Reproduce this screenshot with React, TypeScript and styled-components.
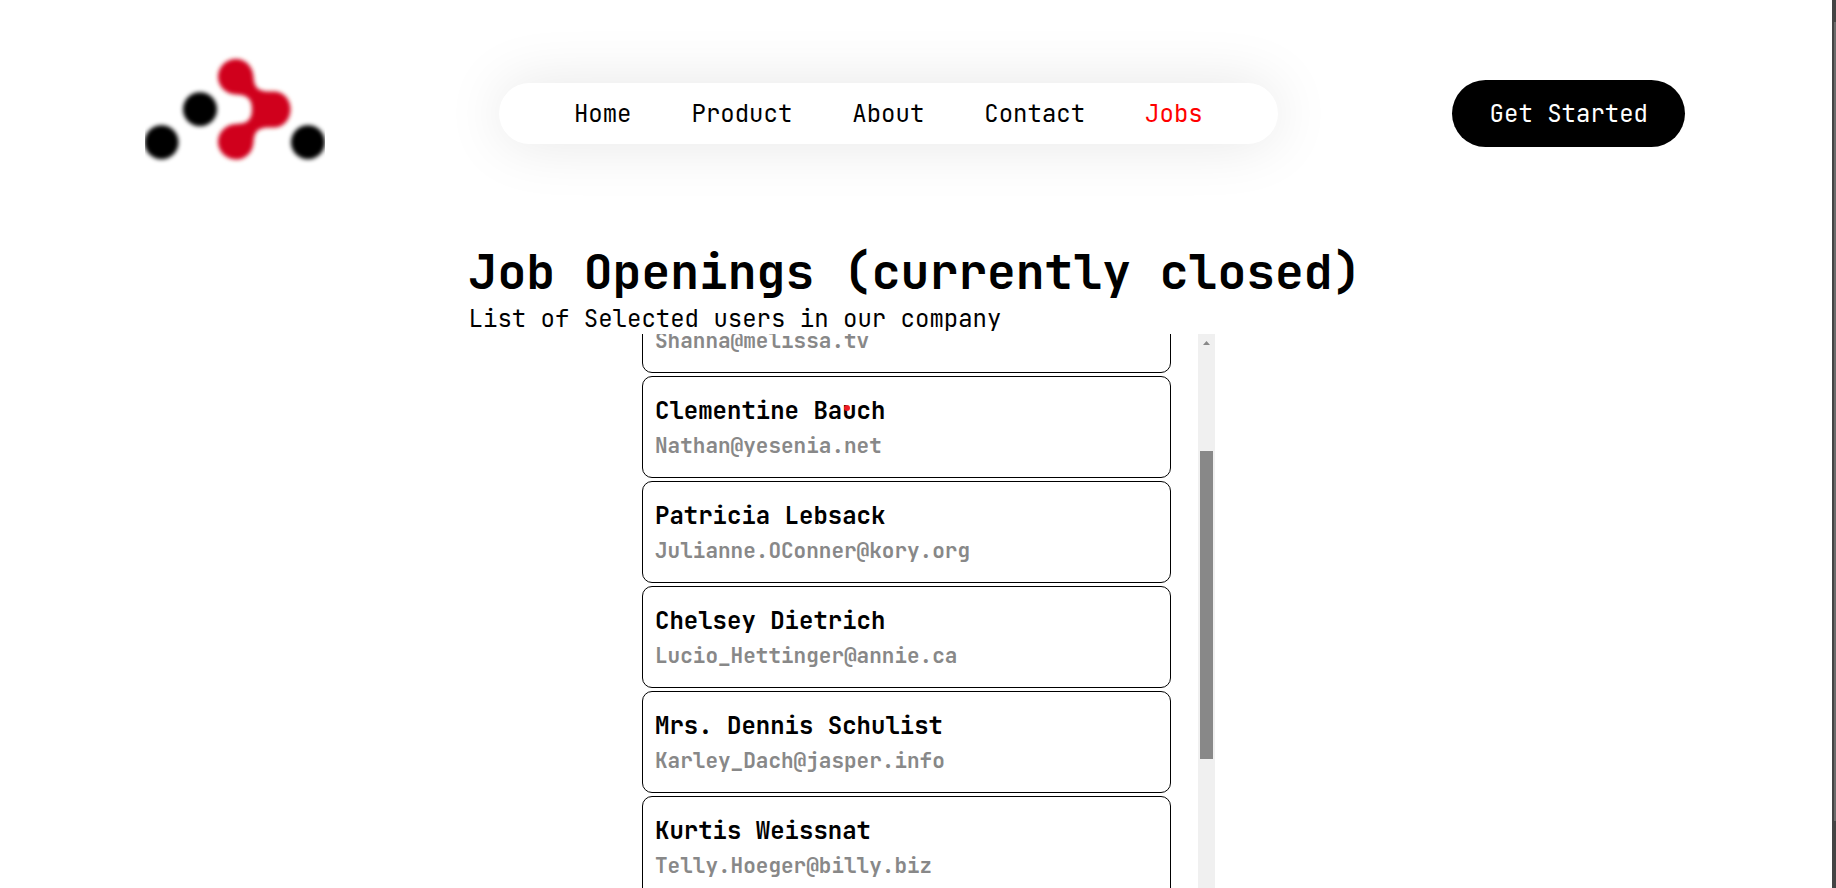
import { useLayoutEffect, useRef } from "react";
import styled, { createGlobalStyle } from "styled-components";

const GlobalStyle = createGlobalStyle`
  * { box-sizing: border-box; margin: 0; padding: 0; }
  body {
    background: #fff;
    color: #000;
    font-family: "JetBrains Mono", "DejaVu Sans Mono", monospace;
    font-size: 24px;
    line-height: 30px;
  }
`;

const Window = styled.div`
  display: flex;
  height: 100vh;
  overflow: hidden;
`;

const Page = styled.div`
  flex: 1;
  min-width: 0;
  display: flex;
  flex-direction: column;
`;

const WindowTrack = styled.div`
  width: 4px;
  background: #444;
  padding: 22px 0 0 2px;
`;

const WindowThumb = styled.div`
  height: 799px;
  max-height: 100%;
  background: #6b6b6b;
`;

const Header = styled.header`
  display: flex;
  align-items: center;
  justify-content: space-between;
  padding: 40px 147px 0 145px;
`;

const LogoLink = styled.a`
  display: block;
  width: 180px;
  height: 147px;

  svg {
    display: block;
    width: 100%;
    height: 100%;
    overflow: hidden;
  }
`;

const Nav = styled.nav`
  display: flex;
  gap: 60px;
  padding: 16px 75px 15px;
  border-radius: 32px;
  background: #fff;
  box-shadow: 0 0 60px rgba(0, 0, 0, 0.1);
`;

const NavLink = styled.a<{ $active?: boolean }>`
  color: ${({ $active }) => ($active ? "#f00" : "#000")};
  text-decoration: none;
`;

const StartButton = styled.button`
  padding: 19px 37px 18px 38px;
  border: 0;
  border-radius: 34px;
  background: #000;
  color: #fff;
  font: inherit;
  cursor: pointer;
`;

const Main = styled.main`
  flex: 1;
  min-height: 0;
  display: flex;
  flex-direction: column;
  align-items: center;
  padding: 53px 2px 0 0;
`;

const Title = styled.h1`
  margin-bottom: 1px;
  font-size: 48px;
  line-height: 63px;
  font-weight: 700;
`;

const UserPanel = styled.section`
  flex: 1;
  min-height: 0;
  width: 600px;
  max-width: 100%;
  display: flex;
  gap: 27px;
  padding-left: 27px;
`;

const UserList = styled.ul`
  flex: 1;
  list-style: none;
  overflow-y: scroll;
  scrollbar-width: none;
`;

const UserCard = styled.li`
  position: relative;
  display: flex;
  flex-direction: column;
  gap: 5px;
  margin-bottom: 3px;
  padding: 18px 12px 17px;
  border: 1px solid #000;
  border-radius: 10px;
`;

const UserName = styled.h2`
  font-size: 24px;
  line-height: 32px;
  font-weight: 700;
`;

const UserEmail = styled.p`
  color: #888;
  font-size: 21px;
  line-height: 28px;
  font-weight: 700;
`;

const Track = styled.div`
  width: 17px;
  display: flex;
  flex-direction: column;
  align-items: center;
  gap: 106px;
  padding-top: 7px;
  background: #f0f0f0;
`;

const Arrow = styled.svg`
  display: block;
  width: 7px;
  height: 4px;
`;

const Thumb = styled.div`
  width: 13px;
  height: 308px;
  background: #888;
`;

const CursorDot = styled.span`
  position: absolute;
  left: 201px;
  top: 28px;
  width: 6px;
  height: 6px;
  border-radius: 50%;
  background: #ed1c24;
`;

const links = ["Home", "Product", "About", "Contact", "Jobs"];

const users = [
  { name: "Leanne Graham", email: "Sincere@april.biz" },
  { name: "Ervin Howell", email: "Shanna@melissa.tv" },
  { name: "Clementine Bauch", email: "Nathan@yesenia.net" },
  { name: "Patricia Lebsack", email: "Julianne.OConner@kory.org" },
  { name: "Chelsey Dietrich", email: "Lucio_Hettinger@annie.ca" },
  { name: "Mrs. Dennis Schulist", email: "Karley_Dach@jasper.info" },
  { name: "Kurtis Weissnat", email: "Telly.Hoeger@billy.biz" },
  { name: "Nicholas Runolfsdottir V", email: "Sherwood@rosamond.me" },
  { name: "Glenna Reichert", email: "Chaim_McDermott@dana.io" },
  { name: "Clementina DuBuque", email: "Rey.Padberg@karina.biz" },
];

const hovered = "Clementine Bauch";
const initialScroll = 168;

function Logo() {
  return (
    <svg viewBox="0 0 180 147" aria-hidden="true">
      <defs>
        <filter id="soften" x="-20%" y="-20%" width="140%" height="140%">
          <feGaussianBlur stdDeviation="2.2" />
        </filter>
      </defs>
      <g filter="url(#soften)">
        <circle cx="16.5" cy="102.3" r="17" />
        <circle cx="55" cy="69.3" r="17" />
        <circle cx="163" cy="102.3" r="17" />
        <path
          fill="#d0021b"
          d="M91 19C101 19 108 27 108.5 37C109 43 110 47 114 49.5C119 52 124 51.5 130 51.5C139 52 145.5 60 145.5 69.3C145.5 79 139 87 130 87.5C124 87.5 119 87 114 89.5C110 92 109 96 108.5 102C108 112 101 119.5 91 119.5C81 119.5 73 111 73 102C73 92 81 84.5 91 84C101 84 107 81 107 69.3C107 57.5 101 55 91 54.5C81 54.5 73 46 73 37C73 27 81 19 91 19Z"
        />
      </g>
    </svg>
  );
}

export default function App() {
  const listRef = useRef<HTMLUListElement>(null);

  useLayoutEffect(() => {
    if (listRef.current) listRef.current.scrollTop = initialScroll;
  }, []);

  return (
    <>
      <GlobalStyle />
      <Window>
        <Page>
          <Header>
            <LogoLink href="#home" aria-label="Home page">
              <Logo />
            </LogoLink>
            <Nav>
              {links.map((label) => (
                <NavLink key={label} href={`#${label.toLowerCase()}`} $active={label === "Jobs"}>
                  {label}
                </NavLink>
              ))}
            </Nav>
            <StartButton type="button">Get Started</StartButton>
          </Header>
          <Main>
            <div>
              <Title>Job Openings (currently closed)</Title>
              <p>List of Selected users in our company</p>
            </div>
            <UserPanel>
              <UserList ref={listRef}>
                {users.map((user) => (
                  <UserCard key={user.email}>
                    <UserName>{user.name}</UserName>
                    <UserEmail>{user.email}</UserEmail>
                    {user.name === hovered && <CursorDot />}
                  </UserCard>
                ))}
              </UserList>
              <Track aria-hidden="true">
                <Arrow viewBox="0 0 7 4">
                  <path d="M3.5 0L7 4H0Z" fill="#888" />
                </Arrow>
                <Thumb />
              </Track>
            </UserPanel>
          </Main>
        </Page>
        <WindowTrack aria-hidden="true">
          <WindowThumb />
        </WindowTrack>
      </Window>
    </>
  );
}
